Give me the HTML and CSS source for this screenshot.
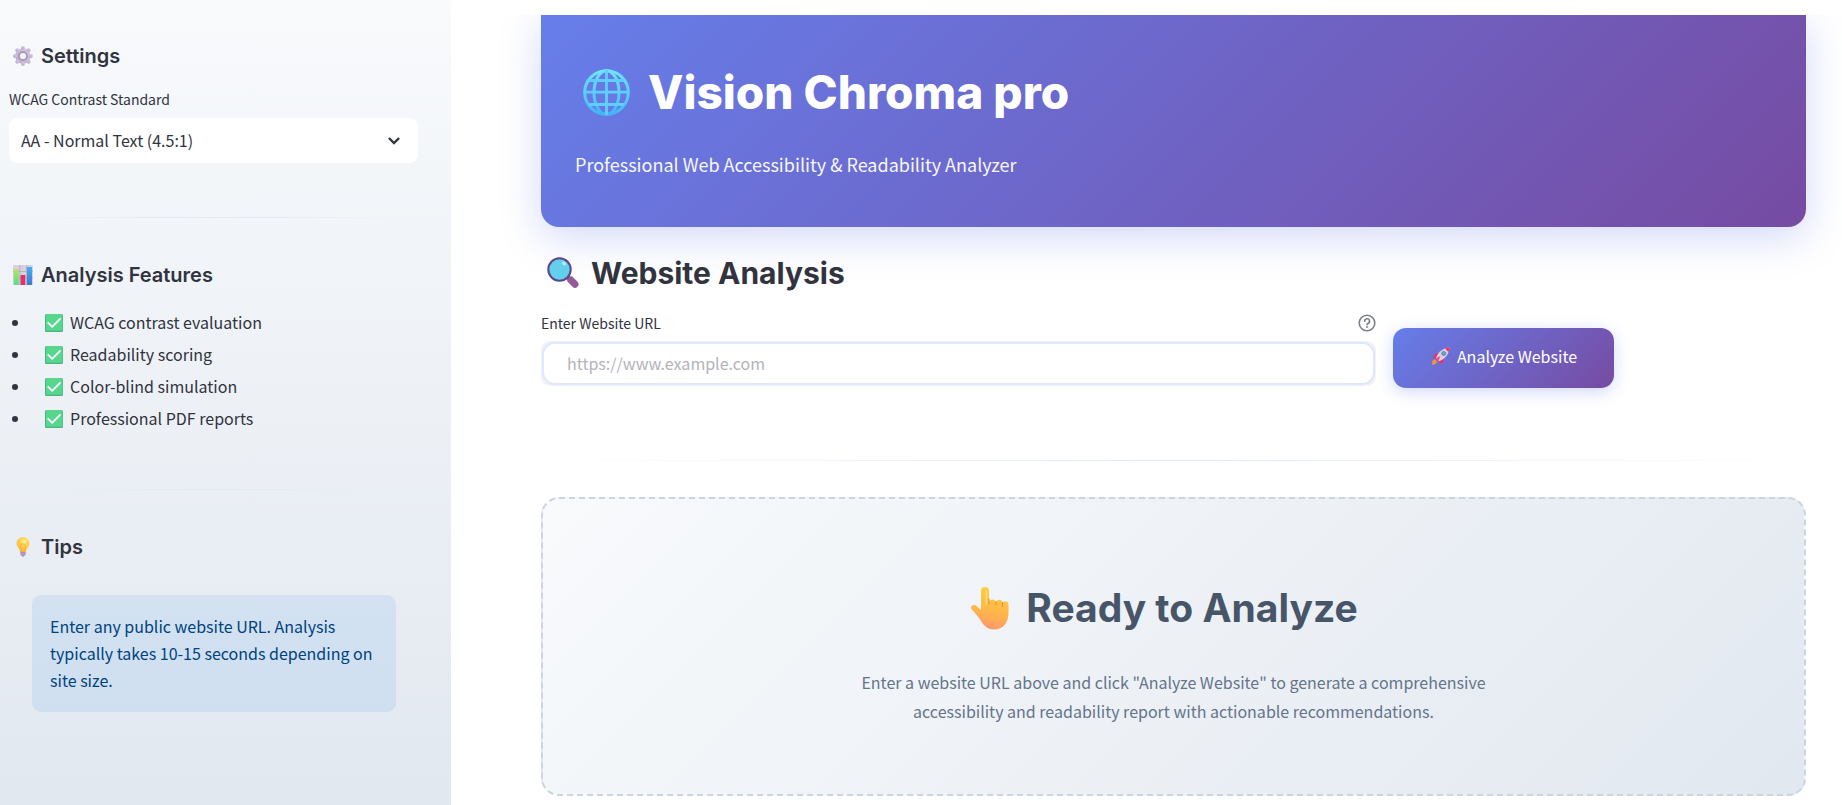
FILE: index.html
```html
<!DOCTYPE html>
<html lang="en">
<head>
<meta charset="utf-8">
<title>Vision Chroma pro</title>
<meta name="viewport" content="width=device-width, initial-scale=1">
<link rel="stylesheet" href="styles.css">
</head>
<body>
<div class="app">
  <aside class="sidebar">
    <h3 class="side-title">
      <svg class="side-icon" viewBox="0 0 20 20" aria-hidden="true">
        <defs><linearGradient id="gear" x1="1" y1="0" x2="0" y2="1"><stop offset="0" stop-color="#d9d0e6"/><stop offset="1" stop-color="#b7a3cc"/></linearGradient></defs>
        <g fill="url(#gear)">
          <circle cx="10" cy="10" r="7.800"/>
          <circle cx="10" cy="2" r="2"/><circle cx="15.700" cy="4.300" r="2"/><circle cx="18" cy="10" r="2"/><circle cx="15.700" cy="15.700" r="2"/>
          <circle cx="10" cy="18" r="2"/><circle cx="4.300" cy="15.700" r="2"/><circle cx="2" cy="10" r="2"/><circle cx="4.300" cy="4.300" r="2"/>
        </g>
        <circle cx="10" cy="10" r="4" fill="#f3f2f8" stroke="#a79bb8" stroke-width="1.800"/>
      </svg>
      Settings
    </h3>
    <label class="field-label" for="standard">WCAG Contrast Standard</label>
    <div class="select-wrap">
      <select class="select" id="standard">
        <option>AA - Normal Text (4.5:1)</option>
        <option>AA - Large Text (3:1)</option>
        <option>AAA - Normal Text (7:1)</option>
      </select>
      <svg class="chevron" viewBox="0 0 12 8" aria-hidden="true"><path d="M.9 1 6 6.100 11.100 1" fill="none" stroke="#31333f" stroke-width="2.300"/></svg>
    </div>
    <hr class="side-rule">
    <h3 class="side-title">
      <svg class="side-icon" viewBox="0 0 20 20" aria-hidden="true">
        <defs><linearGradient id="barg" x1="0" y1="0" x2="0" y2="1"><stop offset="0" stop-color="#b4e35c"/><stop offset="1" stop-color="#4fe08a"/></linearGradient><linearGradient id="barb" x1="0" y1="0" x2="0" y2="1"><stop offset="0" stop-color="#3fb0f5"/><stop offset="1" stop-color="#3a7bd0"/></linearGradient></defs>
        <rect width="20" height="20" rx="1.500" fill="#d9d0dc"/>
        <path d="M0 6.500h20M0 13h20M6.800 0v20M13.500 0v20" stroke="#b3a8bb" stroke-width=".8"/>
        <rect x=".8" y="4.500" width="5" height="15.500" fill="url(#barg)"/>
        <rect x="7.500" y="10" width="4.800" height="10" fill="#e3306d"/>
        <rect x="14" y="2" width="5" height="18" fill="url(#barb)"/>
      </svg>
      Analysis Features
    </h3>
    <ul class="features">
      <li><svg class="check" viewBox="0 0 18 18" aria-hidden="true"><rect width="18" height="18" rx="1.500" fill="#48b383"/><rect x="1" width="16.500" height="16.800" rx="1" fill="#57d68d"/><path d="M3.200 8.800 7.200 12.800 15 5" fill="none" stroke="#fff" stroke-width="1.800" stroke-linecap="round"/></svg>WCAG contrast evaluation</li>
      <li><svg class="check" viewBox="0 0 18 18" aria-hidden="true"><rect width="18" height="18" rx="1.500" fill="#48b383"/><rect x="1" width="16.500" height="16.800" rx="1" fill="#57d68d"/><path d="M3.200 8.800 7.200 12.800 15 5" fill="none" stroke="#fff" stroke-width="1.800" stroke-linecap="round"/></svg>Readability scoring</li>
      <li><svg class="check" viewBox="0 0 18 18" aria-hidden="true"><rect width="18" height="18" rx="1.500" fill="#48b383"/><rect x="1" width="16.500" height="16.800" rx="1" fill="#57d68d"/><path d="M3.200 8.800 7.200 12.800 15 5" fill="none" stroke="#fff" stroke-width="1.800" stroke-linecap="round"/></svg>Color-blind simulation</li>
      <li><svg class="check" viewBox="0 0 18 18" aria-hidden="true"><rect width="18" height="18" rx="1.500" fill="#48b383"/><rect x="1" width="16.500" height="16.800" rx="1" fill="#57d68d"/><path d="M3.200 8.800 7.200 12.800 15 5" fill="none" stroke="#fff" stroke-width="1.800" stroke-linecap="round"/></svg>Professional PDF reports</li>
    </ul>
    <hr class="side-rule">
    <h3 class="side-title">
      <svg class="side-icon" viewBox="0 0 20 20" aria-hidden="true">
        <defs><radialGradient id="bulb" cx=".6" cy=".3" r=".75"><stop offset="0" stop-color="#fff0a0"/><stop offset=".4" stop-color="#ffd34f"/><stop offset="1" stop-color="#f9b23f"/></radialGradient></defs>
        <path d="M10 0a6.500 6.500 0 0 0-6.500 6.500c0 3.200 3.200 4.500 3.600 8.500h5.800c.4-4 3.600-5.300 3.600-8.500A6.500 6.500 0 0 0 10 0z" fill="url(#bulb)"/>
        <path d="M8.800 15 7.500 8.500c-.4-2 5.400-2 5 0L11.200 15" fill="none" stroke="#f4a92f" stroke-width=".8"/>
        <path d="M7.300 15h5.400v2.500l-1.200 1.200L10 20l-1.500-1.300-1.200-1.200z" fill="#a98fb5"/><path d="M7.300 17h5.400" stroke="#cdbbd5" stroke-width=".7"/>
      </svg>
      Tips
    </h3>
    <p class="tip">Enter any public website URL. Analysis typically takes 10-15 seconds depending on site size.</p>
  </aside>

  <div class="main">
    <div class="topbar"></div>
    <main class="content">
      <header class="hero">
        <h1 class="hero-title">
          <svg class="hero-icon" viewBox="0 0 47 47" aria-hidden="true">
            <defs><linearGradient id="globe" x1="0" y1="0" x2="0" y2="1"><stop offset="0" stop-color="#6fe3ff"/><stop offset=".6" stop-color="#58cbff"/><stop offset="1" stop-color="#45b2f8"/></linearGradient></defs>
            <circle cx="23.200" cy="24" r="22" fill="none" stroke="#4a8fd8" stroke-width="2"/>
            <g fill="none" stroke="url(#globe)" stroke-width="3">
              <circle cx="23.500" cy="23.500" r="21.800"/>
              <ellipse cx="23.500" cy="23.500" rx="12.500" ry="21.800"/>
            </g>
            <path d="M23.500 1v45M6 11.500h35M2 23.200h43M6 35.500h35" stroke="#5dd0ff" stroke-width="2.800"/>
          </svg>
          Vision Chroma pro
        </h1>
        <p class="hero-sub">Professional Web Accessibility &amp; Readability Analyzer</p>
      </header>

      <h2 class="section-title">
        <svg class="section-icon" viewBox="0 0 32 32" aria-hidden="true">
          <path d="M20 19.500 27.500 27" stroke="#703a7e" stroke-width="4"/>
          <path d="M23.800 23 28 27.200" stroke="#935a97" stroke-width="7" stroke-linecap="round"/>
          <circle cx="12.500" cy="12.500" r="11.200" fill="#63cfec" stroke="#5b4687" stroke-width="2"/>
          <ellipse cx="17" cy="6.500" rx="2.300" ry="1.600" fill="#b6eefb" transform="rotate(35 17 6.500)"/>
        </svg>
        Website Analysis
      </h2>

      <form class="url-form">
        <div class="url-field">
          <div class="label-row">
            <label class="field-label" for="url">Enter Website URL</label>
            <button class="help" type="button" aria-label="Help">
              <svg viewBox="0 0 18 18" aria-hidden="true"><g fill="none" stroke="#7d7f88" stroke-width="1.600" stroke-linecap="round"><circle cx="9" cy="9" r="7.800"/><path d="M6.700 7.200a2.400 2.400 0 1 1 3.600 2c-.9.500-1.300.8-1.300 1.500"/></g><circle cx="9" cy="13" r=".95" fill="#7d7f88"/></svg>
            </button>
          </div>
          <div class="input-shell">
            <input class="input" id="url" type="text" placeholder="https://www.example.com">
          </div>
        </div>
        <button class="analyze" type="button">
          <svg class="rocket" viewBox="0 0 18 18" aria-hidden="true">
            <path d="M.2 17.800c-.3-2.500.2-4.800 2-5.300 1.500 0 2.800 1.200 2.600 2.700-.4 1.600-2.400 2.500-4.600 2.600z" fill="#f5953b"/>
            <path d="M7 5.500 2.500 7.500.8 11.500l4-.5z" fill="#e8316c"/><path d="M12.500 11 11 15.500l-4 1.800.5-4z" fill="#e8316c"/>
            <path d="M4 11C5.500 6 9.500 1.500 17.500.5c-.8 8-5.500 12-10.500 13.700z" fill="#d9d2e2"/>
            <path d="M13 1.600c1.400-.6 3-.9 4.500-1.100-.1 1.600-.5 3.200-1.100 4.600z" fill="#ee3158"/>
            <circle cx="11.700" cy="6.500" r="2" fill="#57a9e8" stroke="#6e6c98" stroke-width=".8"/>
            <path d="m3.500 11.500 5-2.500-2.300 5.300-1.400.3z" fill="#f0497d"/>
          </svg>
          Analyze Website
        </button>
      </form>

      <hr class="main-rule">

      <section class="ready">
        <h2 class="ready-title">
          <svg class="hand" viewBox="0 0 38 43" aria-hidden="true">
            <defs><linearGradient id="hand" x1=".6" y1="0" x2=".4" y2="1"><stop offset="0" stop-color="#ffcf3f"/><stop offset=".6" stop-color="#ffb54a"/><stop offset="1" stop-color="#fb9571"/></linearGradient></defs>
            <path d="M10 4a4 4 0 0 1 8 0v12c.5-5 7-4.500 7 0 .8-4.500 6.500-4 6.500.5 1-3.500 6-2.800 6 1V26c0 10-5.500 16.500-14.500 16.500-6 0-9.500-3-13-8.500C7.500 29.500 4.500 26.500 1.200 23-2 19.500 2.500 16.500 5.500 19L10 23z" fill="url(#hand)"/>
            <path d="M18 12v5M25 14.500v3.500M31.500 15.500v4" stroke="#e08a2c" stroke-width="1" stroke-linecap="round"/>
            <path d="M15.500 4v13" stroke="#ffe06a" stroke-width="1.500" stroke-linecap="round"/>
          </svg>
          Ready to Analyze
        </h2>
        <p class="ready-text">Enter a website URL above and click "Analyze Website" to generate a comprehensive accessibility and readability report with actionable recommendations.</p>
      </section>
    </main>
  </div>
</div>
</body>
</html>
```
FILE: styles.css
```css
* { box-sizing: border-box; }

body {
  margin: 0;
  background: #fff;
  color: #31333f;
  font-family: "Noto Sans CJK JP", "Noto Sans", sans-serif;
  font-size: 16px;
}

h1, h2, h3, p, ul { margin: 0; padding: 0; }
h1, h2, h3 {
  display: flex;
  align-items: center;
  font-family: Inter, sans-serif;
}
svg { display: block; flex: none; }
button, input, select { font: inherit; color: inherit; }

.app { display: flex; min-height: 100vh; }

.sidebar {
  width: 451px;
  flex: none;
  padding: 40px 33px 24px 9px;
  background: linear-gradient(180deg, #f8fafc 0%, #e2e8f0 100%);
}

.side-title {
  gap: 8px;
  padding-left: 4px;
  font-size: 20px;
  font-weight: 600;
  line-height: 32px;
}
.side-icon { width: 20px; height: 20px; }

.field-label {
  display: block;
  font-size: 14px;
  line-height: 22px;
}
.sidebar .field-label { margin-top: 16px; }

.select-wrap { display: grid; align-items: center; margin-top: 8px; }
.select-wrap > * { grid-area: 1 / 1; }
.select {
  width: 100%;
  height: 45px;
  padding: 0 40px 2px 12px;
  border: 0;
  border-radius: 9px;
  background: #fff;
  appearance: none;
}
.chevron { width: 12px; height: 8px; margin-right: 18px; justify-self: end; pointer-events: none; }

.side-rule, .main-rule {
  height: 1px;
  border: 0;
  background: linear-gradient(90deg, transparent, #e0e7ff, transparent);
}
.side-rule { margin: 54px 0 41px; }

.features {
  margin-top: 15px;
  padding: 0 0 1px 22px;
  list-style: disc;
}
.features li { line-height: 32px; padding-left: 14px; }
.check { display: inline-block; width: 18px; height: 18px; margin-right: 7px; vertical-align: -3px; }

.tip {
  margin: 32px 22px 0 23px;
  padding: 18px;
  border-radius: 9px;
  background: rgba(28, 131, 225, 0.1);
  color: #004280;
  line-height: 27px;
}

.main { flex: 1; min-width: 0; }
.topbar { position: relative; z-index: 1; height: 15px; background: #fff; }
.content { padding: 0 36px 9px 90px; }

.hero {
  padding: 48px 34px 48px;
  border-radius: 0 0 18px 18px;
  background: linear-gradient(135deg, #667eea 0%, #764ba2 100%);
  box-shadow: 0 10px 40px rgba(102, 126, 234, 0.3);
  color: #fff;
}
.hero-title { gap: 18px; padding-left: 8px; font-size: 46px; font-weight: 800; line-height: 58px; }
.hero-icon { width: 47px; height: 47px; }
.hero-sub { margin-top: 28px; font-size: 18px; line-height: 30px; opacity: 0.95; }

.section-title {
  gap: 12px;
  margin-top: 26px;
  padding-left: 6px;
  font-size: 30px;
  font-weight: 700;
  line-height: 40px;
}
.section-icon { width: 32px; height: 32px; }

.url-form {
  display: grid;
  grid-template-columns: 66% 1fr;
  column-gap: 17px;
  align-items: end;
  margin-top: 19px;
}
.label-row { display: flex; justify-content: space-between; align-items: center; }
.help { padding: 0; border: 0; background: none; }
.help svg { width: 18px; height: 18px; }
.input-shell {
  margin-top: 7px;
  padding: 1px;
  border-radius: 9px;
  background: #f0f2f6;
}
.input {
  display: block;
  width: 100%;
  height: 43px;
  padding: 0 23px 2px;
  border: 2px solid #e0e7ff;
  border-radius: 13px;
  background: #fff;
}
.input::placeholder { color: #b2b3b9; opacity: 1; }

.analyze {
  display: flex;
  align-items: center;
  justify-content: center;
  gap: 7px;
  justify-self: start;
  height: 60px;
  margin-bottom: -2px;
  padding: 0 37px 4px 39px;
  border: 0;
  border-radius: 13px;
  background: linear-gradient(135deg, #667eea 0%, #764ba2 100%);
  box-shadow: 0 4px 15px rgba(102, 126, 234, 0.3);
  color: #fff;
}
.rocket { width: 18px; height: 18px; }

.main-rule { margin: 74px 0 36px; }

.ready {
  padding: 80px 34px 68px;
  border: 2px dashed #cbd5e1;
  border-radius: 18px;
  background: linear-gradient(135deg, #f8fafc 0%, #e2e8f0 100%);
  text-align: center;
}
.ready-title {
  justify-content: center;
  gap: 17px;
  padding-right: 18px;
  color: #475569;
  font-size: 39px;
  font-weight: 700;
  line-height: 58px;
}
.hand { width: 38px; height: 43px; }
.ready-text { max-width: 660px; margin: 31px auto 0; color: #64748b; line-height: 29px; }
```
